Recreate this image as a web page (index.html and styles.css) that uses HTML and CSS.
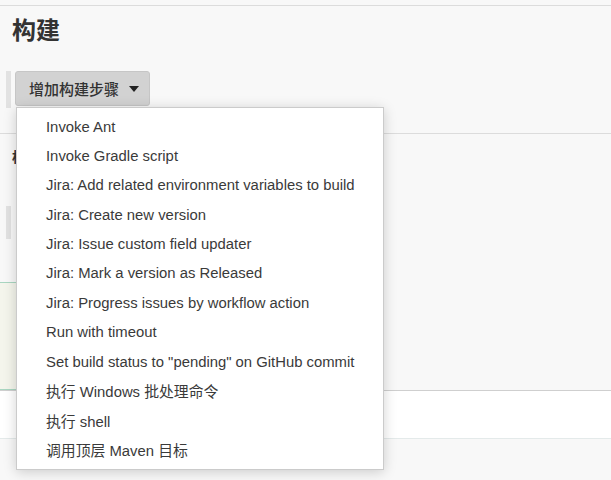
FILE: index.html
```html
<!DOCTYPE html>
<html>
<head>
<meta charset="utf-8">
<link rel="stylesheet" href="styles.css">
</head>
<body>
<div class="topline"></div>
<div class="section">
  <h2 class="title">构建</h2>
  <div class="btnrow">
    <span class="bar"></span>
    <button class="addbtn">增加构建步骤<span class="caret"></span></button>
  </div>
</div>
<div class="section2">
  <h3 class="subtitle">构建后操作</h3>
  <div class="btnrow2">
    <span class="bar bar2"></span>
  </div>
  <div class="notice"></div>
</div>
<div class="bottombar"></div>
<div class="rest"></div>

<ul class="menu">
  <li>Invoke Ant</li>
  <li>Invoke Gradle script</li>
  <li>Jira: Add related environment variables to build</li>
  <li>Jira: Create new version</li>
  <li>Jira: Issue custom field updater</li>
  <li>Jira: Mark a version as Released</li>
  <li>Jira: Progress issues by workflow action</li>
  <li>Run with timeout</li>
  <li>Set build status to "pending" on GitHub commit</li>
  <li>执行 Windows 批处理命令</li>
  <li>执行 shell</li>
  <li>调用顶层 Maven 目标</li>
</ul>
</body>
</html>
```
FILE: styles.css
```css
html, body {
  margin: 0;
  padding: 0;
  background: #f8f8f8;
  font-family: "Liberation Sans", "Noto Sans CJK SC", sans-serif;
  color: #333;
}
.topline {
  height: 5px;
  border-bottom: 1px solid #dcdcdc;
}
.section {
  height: 127px;
  border-bottom: 1px solid #dcdcdc;
}
.title {
  margin: 0;
  padding: 8px 0 0 12px;
  height: 30px;
  line-height: 30px;
  font-size: 24px;
  font-weight: bold;
  color: #333;
  font-family: "Noto Sans CJK SC", sans-serif;
}
.btnrow {
  margin-top: 27px;
  display: flex;
  align-items: flex-start;
  padding-left: 6px;
  gap: 4px;
}
.bar {
  display: block;
  width: 5px;
  height: 37px;
  background: #e2e2e2;
}
.addbtn {
  width: 135px;
  height: 35px;
  border: 1px solid #c6c6c6;
  border-radius: 3px;
  background: #d2d2d2;
  color: #333;
  font-family: "Noto Sans CJK SC", sans-serif;
  font-size: 15px;
  font-weight: 500;
  padding: 0 0 0 13px;
  display: flex;
  align-items: center;
  text-align: left;
}
.caret {
  display: inline-block;
  width: 0;
  height: 0;
  border-left: 5px solid transparent;
  border-right: 5px solid transparent;
  border-top: 6px solid #222;
  margin-left: 10px;
}
.section2 {
  height: 256px;
}
.subtitle {
  margin: 0;
  padding: 12px 0 0 12px;
  font-size: 14px;
  line-height: 20px;
  font-weight: bold;
  color: #333;
  font-family: "Noto Sans CJK SC", sans-serif;
}
.btnrow2 {
  margin-top: 40px;
  padding-left: 6px;
}
.bar2 {
  height: 33px;
}
.notice {
  margin-top: 43px;
  width: 360px;
  height: 106px;
  background: #f4f5ec;
  border-top: 1px solid #a9d6c1;
  border-bottom: 1px solid #a9d6c1;
}
.bottombar {
  height: 47px;
  background: #fff;
  border-top: 1px solid #cfcfcf;
  border-bottom: 1px solid #e4eaea;
}
.rest {
  height: 40px;
}
.menu {
  position: absolute;
  left: 16px;
  top: 107px;
  width: 366px;
  height: 353px;
  margin: 0;
  padding: 4px 0 4px 0;
  list-style: none;
  background: #fff;
  border: 1px solid #cbcbcb;
  box-shadow: 0 2px 12px rgba(0, 0, 0, 0.18);
}
.menu li {
  height: 29.36px;
  display: flex;
  align-items: center;
  padding-left: 29px;
  font-size: 14.85px;
  color: #3a3a3a;
  white-space: nowrap;
}
```
